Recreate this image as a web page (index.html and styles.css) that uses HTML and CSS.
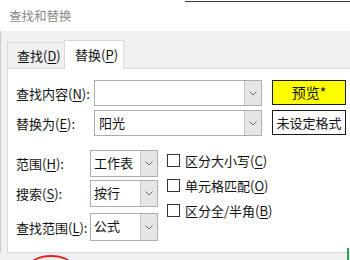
FILE: index.html
```html
<!DOCTYPE html>
<html>
<head>
<meta charset="utf-8">
<link rel="stylesheet" href="styles.css">
</head>
<body>
<div class="window">
  <div class="titlebar">查找和替换</div>
  <div class="main">
    <div class="tabs">
      <div class="tab">查找(<u>D</u>)</div>
      <div class="tab active">替换(<u>P</u>)</div>
    </div>
    <div class="panel">
      <div class="top-grid">
        <div class="lbl">查找内容(<u>N</u>):</div>
        <div class="combo wide"><span class="val"></span><span class="arrow"><svg width="8" height="5" viewBox="0 0 8 5"><polyline points="0.5,0.5 4,4 7.5,0.5" fill="none" stroke="#6b6b6b" stroke-width="1"/></svg></span></div>
        <div class="btn preview">预览*</div>
        <div class="lbl">替换为(<u>E</u>):</div>
        <div class="combo wide"><span class="val">阳光</span><span class="arrow"><svg width="8" height="5" viewBox="0 0 8 5"><polyline points="0.5,0.5 4,4 7.5,0.5" fill="none" stroke="#6b6b6b" stroke-width="1"/></svg></span></div>
        <div class="btn">未设定格式</div>
      </div>
      <div class="lower">
        <div class="opts">
          <div class="opt-row">
            <div class="lbl">范围(<u>H</u>):</div>
            <div class="combo small"><span class="val">工作表</span><span class="arrow"><svg width="8" height="5" viewBox="0 0 8 5"><polyline points="0.5,0.5 4,4 7.5,0.5" fill="none" stroke="#6b6b6b" stroke-width="1"/></svg></span></div>
          </div>
          <div class="opt-row r2">
            <div class="lbl">搜索(<u>S</u>):</div>
            <div class="combo small"><span class="val">按行</span><span class="arrow"><svg width="8" height="5" viewBox="0 0 8 5"><polyline points="0.5,0.5 4,4 7.5,0.5" fill="none" stroke="#6b6b6b" stroke-width="1"/></svg></span></div>
          </div>
          <div class="opt-row r3">
            <div class="lbl">查找范围(<u>L</u>):</div>
            <div class="combo small tall"><span class="val">公式</span><span class="arrow"><svg width="8" height="5" viewBox="0 0 8 5"><polyline points="0.5,0.5 4,4 7.5,0.5" fill="none" stroke="#6b6b6b" stroke-width="1"/></svg></span></div>
          </div>
        </div>
        <div class="checks">
          <div class="check"><span class="box"></span>区分大小写(<u>C</u>)</div>
          <div class="check"><span class="box"></span>单元格匹配(<u>O</u>)</div>
          <div class="check"><span class="box"></span>区分全/半角(<u>B</u>)</div>
        </div>
      </div>
    </div>
  </div>
  <div class="annot"></div>
  <div class="green-mark"></div>
</div>
</body>
</html>
```

FILE: styles.css
```css
html, body {
  margin: 0;
  padding: 0;
}
body {
  font-family: "Noto Sans CJK SC", "Liberation Sans", sans-serif;
  font-size: 13px;
  color: #111;
}
.window {
  position: relative;
  width: 350px;
  height: 260px;
  overflow: hidden;
  background: #f0f0f0;
}
.titlebar {
  height: 30px;
  border-top: 1px solid transparent;
  background:
    linear-gradient(to right, #ffffff 185px, #3a3a3a 185px) no-repeat top left / 100% 1px,
    #ffffff;
  padding-left: 9px;
  line-height: 29px;
  font-size: 12.5px;
  color: #8a8a8a;
}
.main {
  border-left: 1px solid #c9c9c9;
  padding-left: 6px;
  padding-top: 9px;
}
.tabs {
  display: flex;
  align-items: flex-end;
  height: 28px;
}
.tab {
  box-sizing: border-box;
  height: 26px;
  width: 57px;
  padding-left: 9px;
  line-height: 25px;
  border: 1px solid #d9d9d9;
  border-bottom: none;
  border-right: none;
  background: #f0f0f0;
}
.tab.active {
  position: relative;
  z-index: 1;
  height: 29px;
  width: 60px;
  margin-bottom: -1px;
  padding-left: 10px;
  line-height: 28px;
  background: #ffffff;
  border-right: 1px solid #d9d9d9;
}
.tab u, .lbl u, .check u {
  text-decoration: underline;
  text-underline-offset: 2px;
  text-decoration-thickness: 1px;
}
.panel {
  box-sizing: border-box;
  width: 370px;
  height: 185px;
  background: #ffffff;
  border: 1px solid #d9d9d9;
  padding-top: 11px;
  padding-left: 8px;
}
.top-grid {
  display: grid;
  grid-template-columns: 78px 168px 84px;
  grid-auto-rows: 26px;
  row-gap: 4px;
  align-items: center;
}
.lbl {
  white-space: nowrap;
}
.combo {
  box-sizing: border-box;
  display: flex;
  height: 26px;
  border: 1px solid #adadad;
  background: #fff;
}
.combo .val {
  flex: 1;
  padding-left: 4px;
  line-height: 23px;
  white-space: nowrap;
}
.combo .arrow {
  width: 16px;
  background: #e6e6e6;
  border-left: 1px solid #c4c4c4;
  display: flex;
  align-items: center;
  justify-content: center;
}
.btn {
  box-sizing: border-box;
  margin-left: 10px;
  height: 25px;
  border: 1px solid #1a1a1a;
  background: #fff;
  text-align: center;
  line-height: 23px;
  font-size: 13px;
  align-self: start;
}
.btn.preview {
  background: #ffff00;
  font-size: 14px;
}
.lower {
  display: flex;
  margin-top: 14px;
}
.opts {
  display: flex;
  flex-direction: column;
}
.opt-row {
  display: grid;
  grid-template-columns: 74px 68px;
  align-items: center;
}
.opt-row .combo {
  height: 27px;
}
.opt-row .combo .val {
  line-height: 24px;
  padding-left: 3px;
}
.opt-row.r2 {
  margin-top: 3px;
}
.opt-row.r3 {
  margin-top: 6px;
}
.opt-row .combo.tall {
  height: 28px;
}
.checks {
  margin-left: 9px;
  display: flex;
  flex-direction: column;
  gap: 5px;
}
.check {
  display: flex;
  align-items: center;
  height: 20px;
  white-space: nowrap;
}
.box {
  box-sizing: border-box;
  width: 13px;
  height: 13px;
  border: 1px solid #333;
  margin-right: 5px;
  background: #fff;
}
.annot {
  position: absolute;
  left: 30px;
  top: 255px;
  width: 38px;
  height: 16px;
  border: 2px solid #e0231c;
  border-radius: 50%;
}
.green-mark {
  position: absolute;
  left: 347px;
  top: 248px;
  width: 2px;
  height: 12px;
  background: #2aa44a;
}
```
